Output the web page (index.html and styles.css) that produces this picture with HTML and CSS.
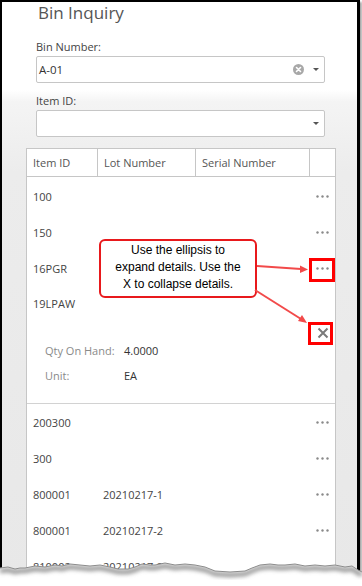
FILE: index.html
```html
<!DOCTYPE html>
<html lang="en">
<head>
    <meta charset="UTF-8">
    <meta name="viewport" content="width=device-width, initial-scale=1.0">
    <title>Bin Inquiry</title>
    <link rel="stylesheet" href="styles.css">
</head>
<body>
    <div class="shot">
        <div class="page">
            <h1 class="title">Bin Inquiry</h1>

            <div class="field">
                <label>Bin Number:</label>
                <div class="combo">
                    <span class="value">A-01</span>
                    <svg class="clear" width="11" height="11" viewBox="0 0 11 11">
                        <circle cx="5.5" cy="5.5" r="5.5" fill="#a8a8a8"/>
                        <path d="M3.5 3.5 L7.5 7.5 M7.5 3.5 L3.5 7.5" stroke="#fff" stroke-width="1.6" stroke-linecap="round"/>
                    </svg>
                    <span class="caret"></span>
                </div>
            </div>

            <div class="field field-second">
                <label>Item ID:</label>
                <div class="combo">
                    <span class="value"></span>
                    <span class="caret"></span>
                </div>
            </div>

            <div class="grid">
                <div class="grid-head">
                    <div class="cell">Item ID</div>
                    <div class="cell">Lot Number</div>
                    <div class="cell">Serial Number</div>
                    <div class="cell"></div>
                </div>
                <div class="grid-body">
                    <div class="row">
                        <div class="cell">100</div>
                        <div class="cell lot"></div>
                        <div class="cell"></div>
                        <div class="cell more"><svg width="13" height="3" viewBox="0 0 13 3"><circle cx="1.5" cy="1.5" r="1.2"/><circle cx="6.5" cy="1.5" r="1.2"/><circle cx="11.5" cy="1.5" r="1.2"/></svg></div>
                    </div>
                    <div class="row">
                        <div class="cell">150</div>
                        <div class="cell lot"></div>
                        <div class="cell"></div>
                        <div class="cell more"><svg width="13" height="3" viewBox="0 0 13 3"><circle cx="1.5" cy="1.5" r="1.2"/><circle cx="6.5" cy="1.5" r="1.2"/><circle cx="11.5" cy="1.5" r="1.2"/></svg></div>
                    </div>
                    <div class="row">
                        <div class="cell">16PGR</div>
                        <div class="cell lot"></div>
                        <div class="cell"></div>
                        <div class="cell more"><svg width="13" height="3" viewBox="0 0 13 3"><circle cx="1.5" cy="1.5" r="1.2"/><circle cx="6.5" cy="1.5" r="1.2"/><circle cx="11.5" cy="1.5" r="1.2"/></svg></div>
                    </div>
                    <div class="expanded">
                        <div class="main">
                            <div class="row-id">19LPAW</div>
                            <div class="details">
                                <div class="detail"><span>Qty On Hand:</span><span>4.0000</span></div>
                                <div class="detail"><span>Unit:</span><span>EA</span></div>
                            </div>
                        </div>
                        <div class="close">
                            <svg width="12" height="12" viewBox="0 0 12 12"><path d="M1.5 1.5 L10.5 10.5 M10.5 1.5 L1.5 10.5" stroke="#7a7a7a" stroke-width="2"/></svg>
                        </div>
                    </div>
                    <div class="row">
                        <div class="cell">200300</div>
                        <div class="cell lot"></div>
                        <div class="cell"></div>
                        <div class="cell more"><svg width="13" height="3" viewBox="0 0 13 3"><circle cx="1.5" cy="1.5" r="1.2"/><circle cx="6.5" cy="1.5" r="1.2"/><circle cx="11.5" cy="1.5" r="1.2"/></svg></div>
                    </div>
                    <div class="row">
                        <div class="cell">300</div>
                        <div class="cell lot"></div>
                        <div class="cell"></div>
                        <div class="cell more"><svg width="13" height="3" viewBox="0 0 13 3"><circle cx="1.5" cy="1.5" r="1.2"/><circle cx="6.5" cy="1.5" r="1.2"/><circle cx="11.5" cy="1.5" r="1.2"/></svg></div>
                    </div>
                    <div class="row">
                        <div class="cell">800001</div>
                        <div class="cell lot">20210217-1</div>
                        <div class="cell"></div>
                        <div class="cell more"><svg width="13" height="3" viewBox="0 0 13 3"><circle cx="1.5" cy="1.5" r="1.2"/><circle cx="6.5" cy="1.5" r="1.2"/><circle cx="11.5" cy="1.5" r="1.2"/></svg></div>
                    </div>
                    <div class="row">
                        <div class="cell">800001</div>
                        <div class="cell lot">20210217-2</div>
                        <div class="cell"></div>
                        <div class="cell more"><svg width="13" height="3" viewBox="0 0 13 3"><circle cx="1.5" cy="1.5" r="1.2"/><circle cx="6.5" cy="1.5" r="1.2"/><circle cx="11.5" cy="1.5" r="1.2"/></svg></div>
                    </div>
                    <div class="row">
                        <div class="cell">810002</div>
                        <div class="cell lot">20210217-2</div>
                        <div class="cell"></div>
                        <div class="cell more"></div>
                    </div>
                </div>
            </div>
        </div>

        <!-- annotation layer -->
        <div class="callout">Use the ellipsis to<br>expand details. Use the<br>X to collapse details.</div>
        <div class="mark mark-more"></div>
        <div class="mark mark-close"></div>
        <svg class="arrows" width="362" height="586" viewBox="0 0 362 586">
            <g stroke="#f24a4a" stroke-width="2" fill="none">
                <path d="M257 266 L301 269"/>
                <path d="M255 290 L301 319"/>
            </g>
            <g fill="#f24a4a">
                <polygon points="308,269.5 300,265.5 300,273"/>
                <polygon points="307,323 298,321 302,315"/>
            </g>
        </svg>

        <svg class="torn" width="362" height="36" viewBox="0 0 362 36">
            <defs>
                <clipPath id="below">
                    <polygon points="0,18 8,17 15,19 20,18 25,18 30,17 35,16 45,17 50,16 55,15 62,16 70,14 80,15 90,16 100,15 110,17 118,19 128,19 135,17 142,14 150,15 155,15 165,13 175,15 185,14 195,15 205,17 210,19 215,21 230,22 245,21 252,18 260,15 270,14 278,15 285,15 295,14 305,16 315,15 325,16 335,15 345,17 352,16 358,20 362,22 362,36 0,36"/>
                </clipPath>
                <filter id="soft" x="-5%" y="-50%" width="110%" height="200%">
                    <feGaussianBlur stdDeviation="2.2"/>
                </filter>
            </defs>
            <polygon fill="#fff" points="0,18 8,17 15,19 20,18 25,18 30,17 35,16 45,17 50,16 55,15 62,16 70,14 80,15 90,16 100,15 110,17 118,19 128,19 135,17 142,14 150,15 155,15 165,13 175,15 185,14 195,15 205,17 210,19 215,21 230,22 245,21 252,18 260,15 270,14 278,15 285,15 295,14 305,16 315,15 325,16 335,15 345,17 352,16 358,20 362,22 362,36 0,36"/>
            <g clip-path="url(#below)">
                <polyline filter="url(#soft)" transform="translate(0,3)" fill="none" stroke="#8a8a8a" stroke-width="4" points="0,18 8,17 15,19 20,18 25,18 30,17 35,16 45,17 50,16 55,15 62,16 70,14 80,15 90,16 100,15 110,17 118,19 128,19 135,17 142,14 150,15 155,15 165,13 175,15 185,14 195,15 205,17 210,19 215,21 230,22 245,21 252,18 260,15 270,14 278,15 285,15 295,14 305,16 315,15 325,16 335,15 345,17 352,16 358,20 362,22"/>
            </g>
            <polyline fill="none" stroke="#8c8c8c" stroke-width="1" points="0,18 8,17 15,19 20,18 25,18 30,17 35,16 45,17 50,16 55,15 62,16 70,14 80,15 90,16 100,15 110,17 118,19 128,19 135,17 142,14 150,15 155,15 165,13 175,15 185,14 195,15 205,17 210,19 215,21 230,22 245,21 252,18 260,15 270,14 278,15 285,15 295,14 305,16 315,15 325,16 335,15 345,17 352,16 358,20 362,22"/>
        </svg>
    </div>
</body>
</html>
```

FILE: styles.css
```css
body {
    margin: 0;
    background: #fff;
    font-family: "Open Sans", "Noto Sans", sans-serif;
}
.shot {
    position: relative;
    width: 362px;
    height: 586px;
    overflow: hidden;
    background: #fff;
}
.page {
    width: 360px;
    height: 586px;
    box-sizing: border-box;
    border: 2px solid #000;
    border-right-width: 3px;
    border-bottom: 0;
    background: linear-gradient(#fff 88px, #f4f4f4 100px, #ececec 170px, #e8e8e8);
    box-shadow: 2px 2px 2px rgba(0, 0, 0, 0.35);
}
.title {
    margin: 0 0 14px 36px;
    font-size: 17px;
    font-weight: 400;
    line-height: 22px;
    color: #555;
}
.field {
    margin-left: 34px;
    width: 289px;
}
.field-second {
    margin-top: 9px;
}
.field label {
    display: block;
    font-size: 11px;
    line-height: 17px;
    color: #444;
    margin-bottom: 1px;
}
.combo {
    height: 27px;
    box-sizing: border-box;
    border: 1px solid #c6c6c6;
    border-radius: 2px;
    background: #fff;
    display: flex;
    align-items: center;
    padding: 0 5px 0 2px;
}
.combo .value {
    flex: 1;
    font-size: 11.5px;
    color: #333;
}
.clear {
    margin-right: 9px;
}
.caret {
    width: 0;
    height: 0;
    border-left: 3px solid transparent;
    border-right: 3px solid transparent;
    border-top: 3px solid #555;
}
.grid {
    margin: 11px 0 0 24px;
    width: 310px;
    box-sizing: border-box;
    background: #fff;
    border: 1px solid #c6c6c6;
    border-bottom: 0;
    font-size: 11px;
    color: #444;
}
.grid-head,
.row {
    display: grid;
    grid-template-columns: 71px 98px 114px 25px;
}
.grid-head {
    border-bottom: 1px solid #c6c6c6;
    color: #555;
}
.grid-head .cell {
    height: 27px;
    line-height: 27px;
    box-sizing: border-box;
    padding: 0 6px;
    border-right: 1px solid #c6c6c6;
    white-space: nowrap;
}
.grid-head .cell:last-child {
    border-right: 0;
}
.grid-body {
    padding-top: 1px;
}
.row {
    height: 36px;
    align-items: center;
}
.row .cell {
    padding: 0 6px;
    white-space: nowrap;
}
.row .lot {
    padding-left: 5px;
}
.row .more {
    padding: 0;
    display: flex;
    justify-content: center;
}
.more svg {
    fill: #8a8a8a;
}
.expanded {
    display: flex;
    border-bottom: 1px solid #d2d2d2;
}
.expanded .main {
    flex: 1;
}
.row-id {
    height: 36px;
    line-height: 36px;
    padding-left: 6px;
}
.details {
    padding: 16px 0 15px 18px;
}
.detail {
    display: flex;
    line-height: 25px;
}
.detail span:first-child {
    width: 79px;
    color: #8a8a8a;
}
.detail span:last-child {
    color: #333;
}
.expanded .close {
    width: 25px;
    display: flex;
    justify-content: center;
    align-items: flex-start;
    padding-top: 41px;
    box-sizing: border-box;
}

/* annotations drawn over the screenshot */
.callout {
    position: absolute;
    left: 99px;
    top: 239px;
    width: 158px;
    height: 59px;
    box-sizing: border-box;
    padding-top: 1px;
    border: 2.5px solid #e8191c;
    border-radius: 6px;
    background: #fff;
    font-family: "Liberation Sans", Arial, sans-serif;
    font-size: 12px;
    line-height: 17px;
    text-align: center;
    color: #000;
}
.mark {
    position: absolute;
    box-sizing: border-box;
    border: 3px solid #ff0000;
}
.mark-more {
    left: 309px;
    top: 258px;
    width: 26px;
    height: 24px;
}
.mark-close {
    left: 308px;
    top: 322px;
    width: 25px;
    height: 23px;
}
.arrows {
    position: absolute;
    left: 0;
    top: 0;
    pointer-events: none;
}
.torn {
    position: absolute;
    left: 0;
    top: 550px;
}
```
